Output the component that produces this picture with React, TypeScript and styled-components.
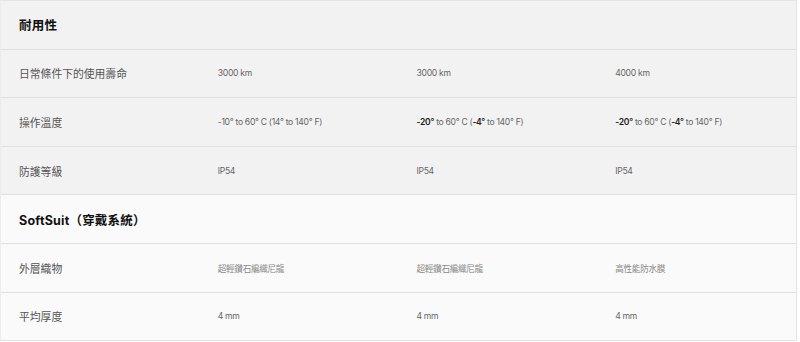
import React from "react";
import styled, { createGlobalStyle } from "styled-components";

const GlobalStyle = createGlobalStyle`
  body {
    margin: 0;
    background: #ffffff;
    font-family: Inter, "Noto Sans CJK TC", sans-serif;
  }
`;

type Cell = React.ReactNode;

interface Section {
  title: string;
  tone: "dark" | "light";
  rows: { label: string; values: Cell[]; cjk?: boolean }[];
}

const temp = (lo: string, loF: string, bold: boolean) =>
  bold ? (
    <>
      <b>{lo}</b> to 60° C (<b>{loF}</b> to 140° F)
    </>
  ) : (
    <>
      {lo} to 60° C ({loF} to 140° F)
    </>
  );

const sections: Section[] = [
  {
    title: "耐用性",
    tone: "dark",
    rows: [
      { label: "日常條件下的使用壽命", values: ["3000 km", "3000 km", "4000 km"] },
      {
        label: "操作溫度",
        values: [temp("-10°", "14°", false), temp("-20°", "-4°", true), temp("-20°", "-4°", true)],
      },
      { label: "防護等級", values: ["IP54", "IP54", "IP54"] },
    ],
  },
  {
    title: "SoftSuit（穿戴系統）",
    tone: "light",
    rows: [
      { label: "外層織物", values: ["超輕鑽石編織尼龍", "超輕鑽石編織尼龍", "高性能防水膜"], cjk: true },
      { label: "平均厚度", values: ["4 mm", "4 mm", "4 mm"] },
    ],
  },
];

function App() {
  return (
    <>
      <GlobalStyle />
      <Table>
        {sections.map((s) => (
          <Group key={s.title} $tone={s.tone}>
            <HeadRow>
              <Heading>{s.title}</Heading>
            </HeadRow>
            {s.rows.map((r) => (
              <Row key={r.label}>
                <Label>{r.label}</Label>
                {r.values.map((v, i) => (
                  <Value key={i} $cjk={r.cjk}>
                    {v}
                  </Value>
                ))}
              </Row>
            ))}
          </Group>
        ))}
      </Table>
    </>
  );
}
export default App;

const Table = styled.div`
  width: 797px;
  box-sizing: border-box;
  border-top: 1px solid #e4e4e4;
  border-left: 1px solid #ececec;
  border-right: 1px solid #e4e4e4;
`;

const Group = styled.div<{ $tone: "dark" | "light" }>`
  background: ${(p) => (p.$tone === "dark" ? "#f2f2f2" : "#fafafa")};
`;

const HeadRow = styled.div`
  height: 48.6px;
  box-sizing: border-box;
  display: flex;
  align-items: center;
  padding-left: 18px;
  border-bottom: 1px solid #e0e0e0;
`;

const Heading = styled.h3`
  margin: 0;
  font-size: 12.5px;
  font-weight: 700;
  color: #111;
  letter-spacing: 0.2px;
`;

const Row = styled.div`
  height: 48.6px;
  box-sizing: border-box;
  display: grid;
  grid-template-columns: repeat(4, 1fr);
  align-items: center;
  border-bottom: 1px solid #e0e0e0;
`;

const Label = styled.div`
  padding-left: 18px;
  font-size: 10.8px;
  color: #555;
`;

const Value = styled.div<{ $cjk?: boolean }>`
  padding-left: 18px;
  font-size: ${(p) => (p.$cjk ? "8.6px" : "8.6px")};
  color: ${(p) => (p.$cjk ? "#888" : "#666")};
  letter-spacing: -0.3px;
  b {
    font-weight: 600;
    color: #222;
  }
`;
